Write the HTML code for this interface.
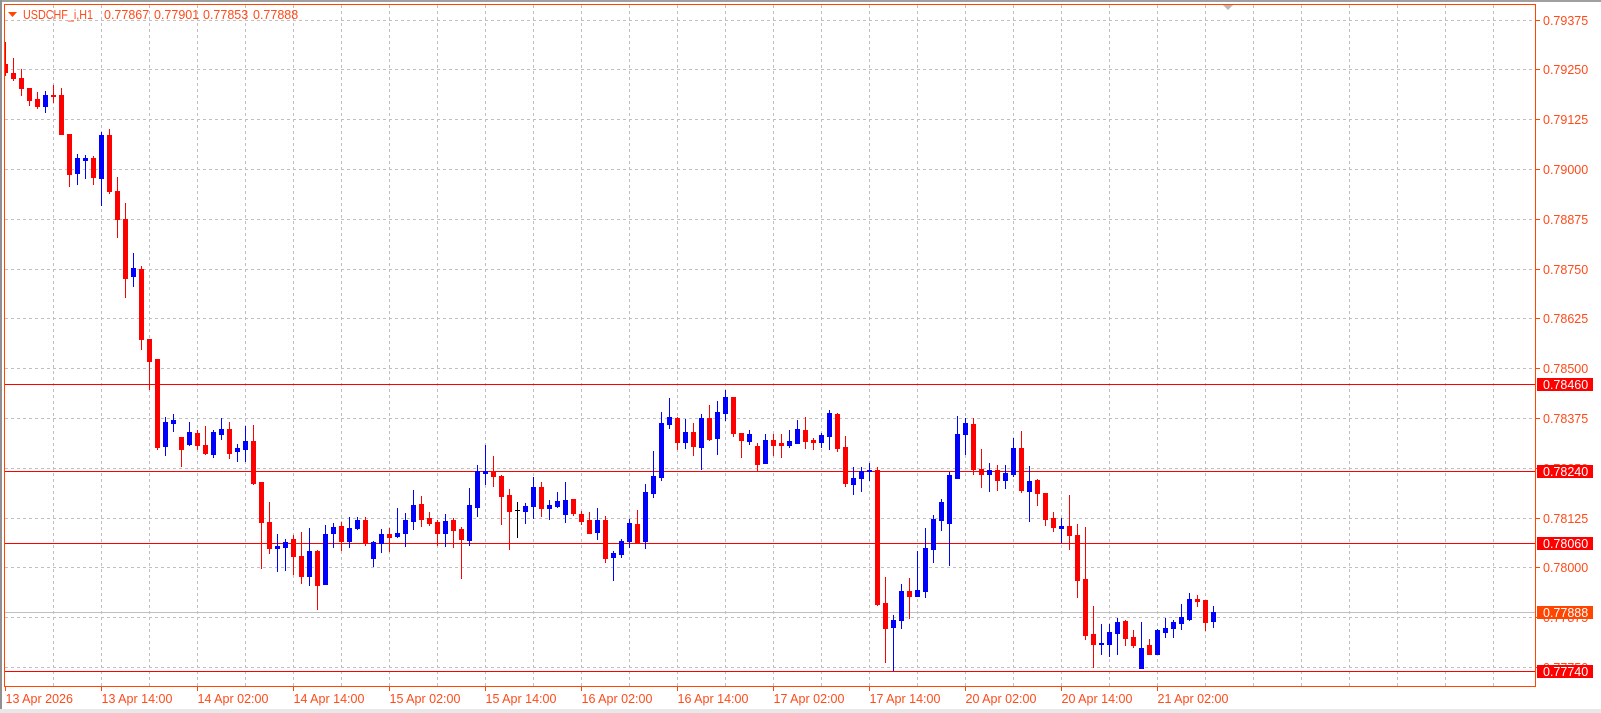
<!DOCTYPE html>
<html><head><meta charset="utf-8">
<style>
html,body{margin:0;padding:0;background:#fff;width:1601px;height:713px;overflow:hidden}
svg{display:block}
text{font-family:"Liberation Sans",Arial,sans-serif;font-size:12.5px}
</style></head>
<body>
<svg id="c" width="1601" height="713" xmlns="http://www.w3.org/2000/svg">
<rect x="0" y="0" width="1601" height="713" fill="#fff"/>
<rect x="0" y="0" width="1601" height="2" fill="#a0a0a0"/>
<rect x="0" y="0" width="2" height="713" fill="#909090"/>
<rect x="0" y="709" width="1601" height="4" fill="#e8e8e8"/>
<g id="grid"></g>
<g id="lines"></g>
<g id="candles"></g>
<rect x="4.5" y="4.5" width="1531" height="682" fill="none" stroke="#ff4500" stroke-width="1"/>
<g id="axis"></g>
<polygon points="1223,5 1233,5 1228,10" fill="#b8b8b8"/>
<polygon points="8,12 17,12 12.5,17" fill="#ff4500"/>
<g fill="#ff4a1a">
<text x="23" y="19" textLength="70" lengthAdjust="spacingAndGlyphs">USDCHF_i,H1</text>
<text x="104" y="19">0.77867</text>
<text x="154" y="19">0.77901</text>
<text x="203" y="19">0.77853</text>
<text x="253" y="19">0.77888</text>
</g>
</svg>
<script>
(function(){
var NS="http://www.w3.org/2000/svg";
function el(p,t,a,txt){var e=document.createElementNS(NS,t);for(var k in a)e.setAttribute(k,a[k]);if(txt!=null)e.textContent=txt;p.appendChild(e);return e;}
var grid=document.getElementById('grid'),lines=document.getElementById('lines'),cg=document.getElementById('candles'),ax=document.getElementById('axis');
for(var x=53;x<1535;x+=48){el(grid,'line',{x1:x+0.5,y1:5,x2:x+0.5,y2:686,stroke:'#c0c0c0','stroke-dasharray':'3,3'});}
var prices=['0.79375','0.79250','0.79125','0.79000','0.78875','0.78750','0.78625','0.78500','0.78375','0.78250','0.78125','0.78000','0.77875','0.77750'];
for(var k=0;k<14;k++){var y=Math.round(19.5+49.8*k)+0.5;
 el(grid,'line',{x1:5,y1:y,x2:1535,y2:y,stroke:'#c0c0c0','stroke-dasharray':'3,3'});
 el(ax,'line',{x1:1535,y1:y,x2:1540,y2:y,stroke:'#ff4500'});
 el(ax,'text',{x:1543,y:y+4.5,fill:'#ff4a1a'},prices[k]);}
[[384,'#ff0000'],[471,'#ff0000'],[543,'#ff0000'],[671,'#ff0000'],[612,'#c0c0c0']].forEach(function(l){
 el(lines,'line',{x1:5,y1:l[0]+0.5,x2:1535,y2:l[0]+0.5,stroke:l[1]});});
[[384,'0.78460','#ff0000'],[471,'0.78240','#ff0000'],[543,'0.78060','#ff0000'],[612,'0.77888','#ff4500'],[671,'0.77740','#ff0000']].forEach(function(b){
 el(ax,'rect',{x:1537,y:b[0]-6,width:56,height:13,fill:b[2]});
 el(ax,'text',{x:1543,y:b[0]+5,fill:'#fff'},b[1]);});
var tl=['13 Apr 2026','13 Apr 14:00','14 Apr 02:00','14 Apr 14:00','15 Apr 02:00','15 Apr 14:00','16 Apr 02:00','16 Apr 14:00','17 Apr 02:00','17 Apr 14:00','20 Apr 02:00','20 Apr 14:00','21 Apr 02:00'];
for(var i=0;i<tl.length;i++){var tx=5+96*i;
 el(ax,'line',{x1:tx+0.5,y1:687,x2:tx+0.5,y2:691,stroke:'#ff4500'});
 el(ax,'text',{x:tx+0.5,y:703,fill:'#ff4a1a'},tl[i]);}
var z3=[['r',25,87,108,115],['r',70,111,123,130],['r',100,124,150,170],['r',150,150,183,197],['r',162,181,199,205],['b',160,170,199,215],['r',143,169,173,190],['r',150,170,275,275],['r',276,276,386,418],['b',330,341,383,412],['b',333,341,348,396],['r',336,341,394,412],['b',272,278,396,470],['r',262,278,432,437],['r',392,430,507,556],['r',465,506,667,718],['b',600,641,661,688],['r',635,643,834,860],['r',832,833,894,968],['r',889,889,1126,1133],['b',1044,1060,1124,1148],['b',1038,1053,1061,1083],['r',1100,1100,1132,1178],['b',1060,1087,1118,1122],['r',1080,1089,1121,1133],['r',1070,1121,1143,1146],['b',1080,1086,1145,1153],['b',1048,1078,1091,1105],['r',1060,1078,1143,1156],['b',1118,1129,1137,1165],['b',1070,1110,1133,1165],['r',1068,1110,1225,1228],['r',1221,1221,1332,1455],['r',1276,1330,1402,1416],['b',1362,1395,1402,1464],['b',1376,1384,1398,1460],['r',1365,1376,1424,1472]];
var data=z3.map(function(a){return [a[0]].concat(a.slice(1).map(function(v){return 32.4+v/2.718;}));});
var rest=[['r',532,556,576,583],['b',528,551,576,585],['r',550,551,585,609],['b',525,534,584,584],['b',523,527,533,547],['r',522,526,541,550],['b',517,528,541,547],['b',517,520,528,529],['r',517,520,542,545],['b',541,542,558,566],['b',529,534,543,552],['r',528,534,537,551],['b',508,533,536,537],['b',513,520,533,546],['b',490,505,521,529],['r',496,504,519,526],['r',512,518,523,525],['r',520,522,533,545],['b',514,521,533,546],['r',518,520,530,547],['r',527,529,539,578],['b',488,505,540,545],['b',465,471,507,516],['b',445,471,473,484],['r',456,471,476,486],['r',475,476,496,524],['r',489,495,511,549],['k',502,510,510,537],['b',503,506,511,523],['b',477,487,506,518],['r',482,487,508,516],['b',500,505,508,519],['b',492,501,506,507],['b',482,500,514,522],['r',499,499,513,515],['r',511,514,521,524],['r',512,520,533,533],['b',508,520,532,539],['r',516,520,558,562],['b',551,553,557,580],['b',539,541,554,557],['b',519,523,541,547],['r',510,524,542,543],['b',484,492,541,548],['b',451,476,493,497],['b',412,423,477,480],['b',398,417,424,428],['r',417,418,442,449],['b',419,432,442,448],['r',423,432,446,455],['b',414,418,447,469],['r',405,418,439,440],['b',401,412,438,454],['b',390,397,413,420],['r',397,397,433,436],['r',433,433,440,457],['b',430,434,441,444],['r',443,446,464,471],['b',434,440,463,463],['r',434,440,445,455],['r',434,443,445,457],['b',430,441,445,447],['b',420,429,443,443],['r',417,430,441,448],['r',438,440,442,449],['b',433,435,442,447],['b',410,413,436,449],['r',413,414,448,451],['r',436,447,483,486],['b',467,478,484,494],['b',467,471,478,491],['b',463,470,471,480],['r',467,470,604,605],['r',577,603,628,662],['b',615,620,627,670],['b',584,591,620,628],['r',578,591,596,618],['b',551,590,596,596],['b',528,548,591,597],['b',515,519,549,562],['b',499,502,520,530],['b',472,475,523,565],['b',416,434,478,478],['b',418,423,434,454],['r',418,424,469,474],['r',449,469,474,487],['b',463,470,474,491],['r',465,470,480,490],['b',465,473,480,488],['b',438,448,474,476],['r',431,448,490,492],['b',466,481,491,521],['r',479,480,493,505],['r',493,493,519,525],['r',512,518,527,531],['b',518,526,528,542],['r',495,526,535,549],['r',524,535,580,597],['r',527,579,635,639],['r',606,634,644,667],['b',624,643,644,654],['b',624,632,644,656],['b',618,622,633,654],['r',620,621,638,645],['r',630,637,645,647],['b',622,648,668,668],['r',639,645,654,654],['b',629,630,654,654],['b',618,628,632,637],['b',620,622,628,637],['b',604,617,623,629],['b',593,599,619,620],['r',595,599,601,606],['r',600,600,622,630],['b',606,612,621,627]];
data=data.concat(rest);
var col={r:'#ff0000',b:'#0000ff',k:'#000000'};
for(var i=0;i<data.length;i++){var d=data[i],c=col[d[0]],x=5+8*i;
 var wt=Math.round(d[1]),bt=Math.round(d[2]),bb=Math.round(d[3]),wb=Math.round(d[4]);
 if(wt<5)wt=5;if(bt<5)bt=5;
 var w0=Math.min(wt,bt),w1=Math.max(wb,bb);
 el(cg,'rect',{x:x,y:w0,width:1,height:Math.max(1,w1-w0+1),fill:c});
 var bx=x-2,bw=5;if(bx<5){bw-=5-bx;bx=5;}
 el(cg,'rect',{x:bx,y:bt,width:bw,height:Math.max(1,bb-bt+1),fill:c});}
})();
</script>
</body></html>
